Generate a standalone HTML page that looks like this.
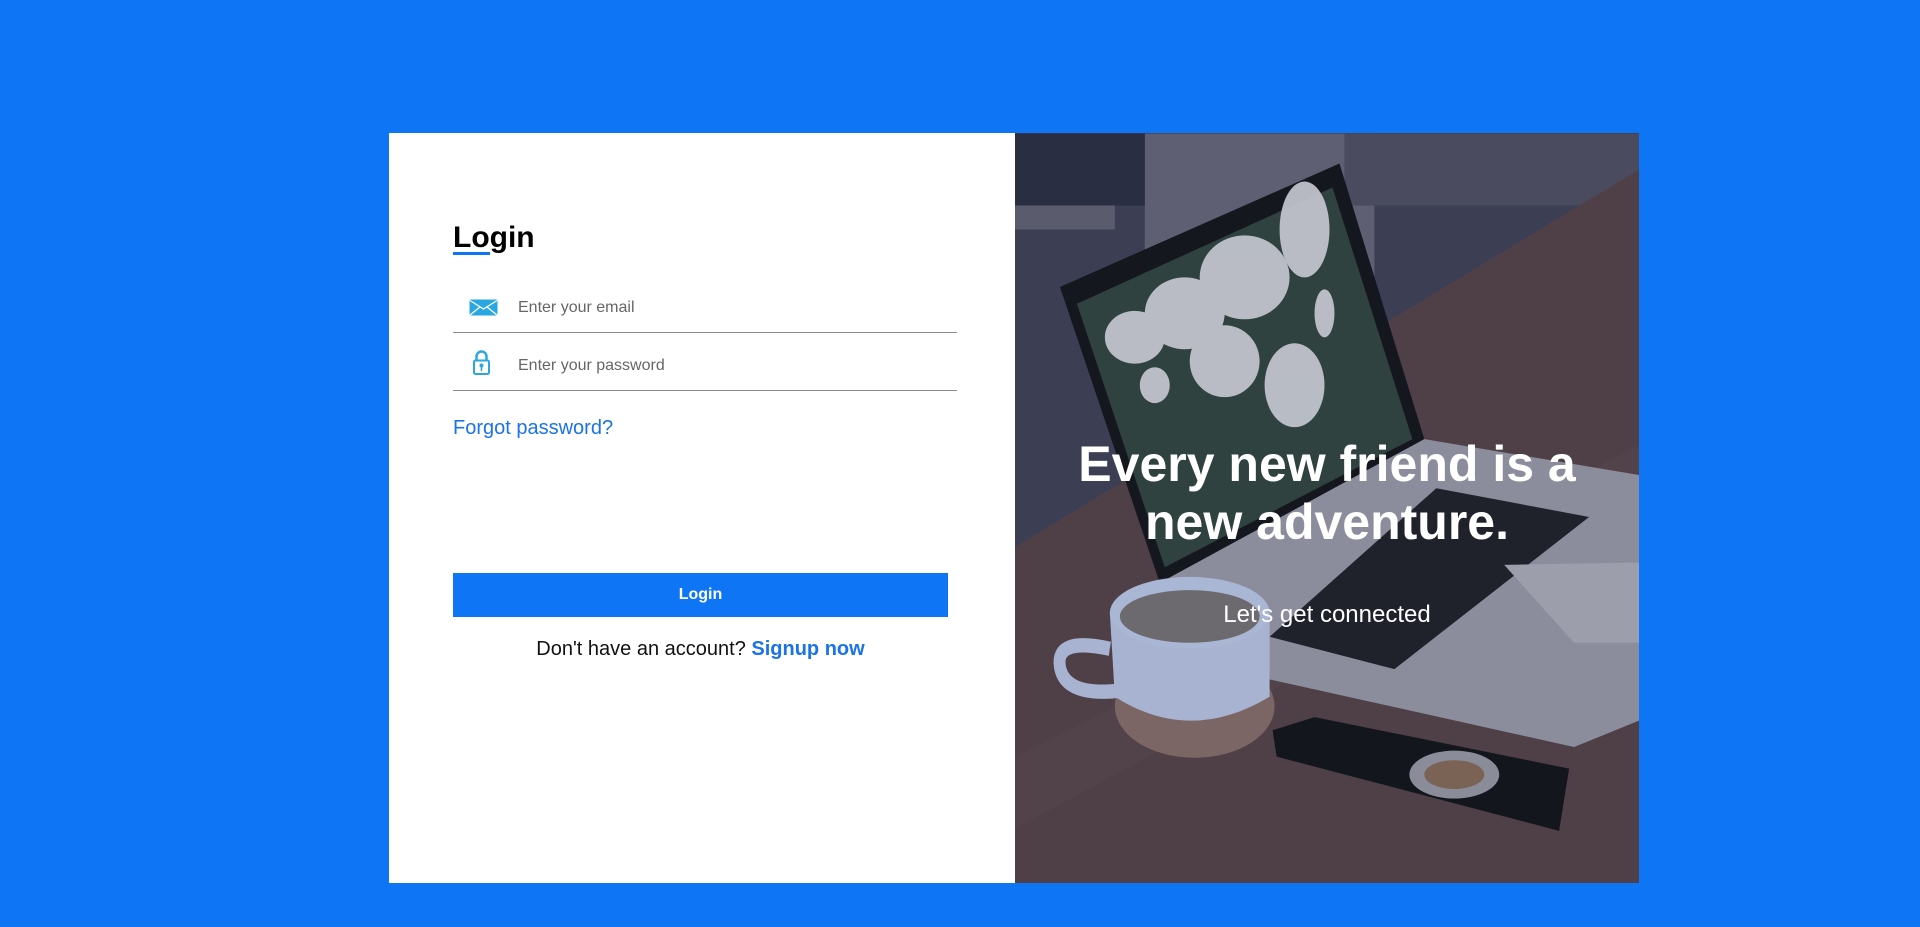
<!DOCTYPE html>
<html><head><meta charset="utf-8"><style>
*{margin:0;padding:0;box-sizing:border-box}
body{width:1920px;height:927px;background:#0e76f4;font-family:"Liberation Sans",Arial,sans-serif;position:relative;overflow:hidden}
.card{position:absolute;left:389px;top:133px;width:1250px;height:750px;background:#fff}
.left{position:absolute;left:0;top:0;width:626px;height:750px}
.right{position:absolute;left:626px;top:0;width:624px;height:750px;overflow:hidden;background:#3f3f52}
h1{position:absolute;left:64px;top:88px;font-size:30px;font-weight:bold;color:#000}
h1:after{content:"";position:absolute;left:0;bottom:0px;width:37px;height:3px;background:#0e76f4}
.field{position:absolute;left:64px;width:504px;height:58px;border-bottom:1px solid #8a8a8a}
.field span{position:absolute;left:65px;top:24px;font-size:16px;color:#666}
.field svg{position:absolute}
.forgot{position:absolute;left:64px;top:284px;font-size:20px;color:#1a73e8}
.btn{position:absolute;left:64px;top:440px;width:495px;height:44px;background:#0e76f4;color:#fff;font-weight:bold;font-size:16px;text-align:center;line-height:44px}
.sign{position:absolute;left:64px;top:505px;width:495px;text-align:center;font-size:20px;color:#111}
.sign b{color:#1a73e8}
.txt{position:absolute;left:0;width:624px;text-align:center;color:#fff}
</style></head><body>
<div class="card">
<div class="left">
<h1>Login</h1>
<div class="field" style="top:142px">
<svg style="left:16px;top:24px" width="29" height="17" viewBox="0 0 29 17"><rect x="0.5" y="0.5" width="28" height="16" rx="1.5" fill="#2aa7e0"/><path d="M1 1.5 L14.5 10 L28 1.5 M1 16 L11 8 M28 16 L18 8" stroke="#fff" stroke-width="1.3" fill="none"/></svg>
<span>Enter your email</span></div>
<div class="field" style="top:200px">
<svg style="left:20px;top:17px" width="17" height="25" viewBox="0 0 17 25"><path d="M3.5 11 V6.5 a5 5 0 0 1 10 0 V11" stroke="#2aa7e0" stroke-width="2.5" fill="none"/><rect x="1" y="10.5" width="15" height="13.5" rx="1.5" fill="#fff" stroke="#2aa7e0" stroke-width="2"/><circle cx="8.5" cy="15.5" r="2" fill="#2aa7e0"/><rect x="7.7" y="16" width="1.6" height="5" fill="#2aa7e0"/></svg>
<span>Enter your password</span></div>
<div class="forgot">Forgot password?</div>
<div class="btn">Login</div>
<div class="sign">Don't have an account? <b>Signup now</b></div>
</div>
<div class="right">
<svg width="624" height="750" viewBox="0 0 625 750" style="position:absolute;left:0;top:0">
<rect width="625" height="750" fill="#3c3f54"/>
<g transform="scale(1,1.2)">
<rect x="130" y="0" width="230" height="150" fill="#5e5f72"/>
<rect x="330" y="0" width="295" height="60" fill="#4a4b5e"/>
<rect x="0" y="0" width="130" height="60" fill="#2a2e42"/>
<rect x="0" y="60" width="100" height="20" fill="#5a5b6d"/>
<polygon points="0,345 625,30 625,750 0,750" fill="#4f4048"/>
<polygon points="0,520 625,260 625,300 0,580" fill="#55444c" opacity=".6"/>
<polygon points="45,128 325,25 410,255 145,375" fill="#15171f"/>
<polygon points="62,142 318,45 398,255 150,362" fill="#2f423f"/>
<g fill="#c8cad4" opacity=".9">
<ellipse cx="120" cy="170" rx="30" ry="22"/><ellipse cx="170" cy="150" rx="40" ry="30"/><ellipse cx="230" cy="120" rx="45" ry="35"/><ellipse cx="290" cy="80" rx="25" ry="40"/><ellipse cx="210" cy="190" rx="35" ry="30"/><ellipse cx="280" cy="210" rx="30" ry="35"/><ellipse cx="140" cy="210" rx="15" ry="15"/><ellipse cx="310" cy="150" rx="10" ry="20"/></g>
<polygon points="145,375 410,255 625,285 625,490 560,512 252,455" fill="#8c8d9c"/>
<polygon points="255,420 422,296 575,320 380,447" fill="#1f212b"/>
<polygon points="490,360 625,358 625,425 560,425" fill="#9d9eac"/>
<ellipse cx="180" cy="478" rx="80" ry="43" fill="#7b6665"/>
<path d="M95 400 L255 400 L255 470 Q175 510 100 470 Z" fill="#a7b3d0"/>
<ellipse cx="175" cy="400" rx="80" ry="30" fill="#aab7d4"/>
<ellipse cx="175" cy="403" rx="70" ry="22" fill="#6d6a6f"/>
<path d="M95 430 Q40 420 45 445 Q50 470 105 465" stroke="#a7b3d0" stroke-width="12" fill="none"/>
<polygon points="258,498 300,487 555,530 545,582 262,520" fill="#14161d"/>
<ellipse cx="440" cy="535" rx="45" ry="20" fill="#8b8c99"/><ellipse cx="440" cy="535" rx="30" ry="12" fill="#7a6254"/>
</g>
</svg>
<div class="txt" style="top:302px;font-size:50px;font-weight:bold;line-height:58px">Every new friend is a<br>new adventure.</div>
<div class="txt" style="top:468px;font-size:24px">Let's get connected</div>
</div>
</div>
</body></html>
